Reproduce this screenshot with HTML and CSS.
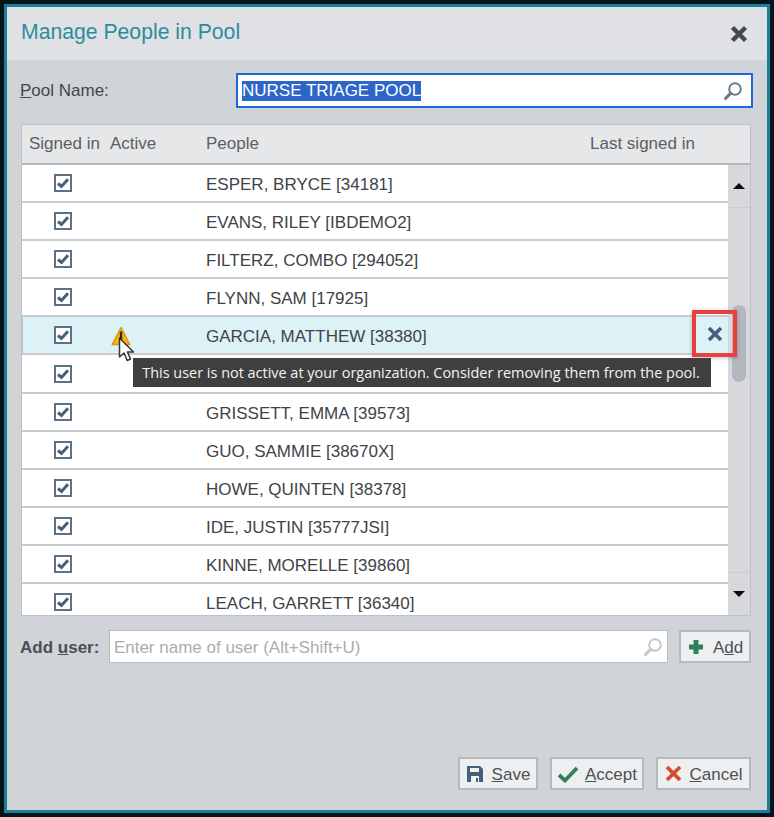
FILE: index.html
```html
<!DOCTYPE html>
<html lang="en">

<head>
    <meta charset="UTF-8">
    <meta name="viewport" content="width=device-width, initial-scale=1.0">
    <title>Manage People in Pool</title>
    <link rel="stylesheet" href="styles.css">
</head>

<body>
    <svg class="defs" width="0" height="0">
        <symbol id="check" viewBox="0 0 18 18">
            <rect x="1" y="1" width="16" height="16" fill="#fff" stroke="#5d7287" stroke-width="2" />
            <path d="M4 9.5l3.5 3L14 5.2" fill="none" stroke="#4a5f75" stroke-width="3" />
        </symbol>
        <symbol id="search" viewBox="0 0 20 20">
            <circle cx="12" cy="8" r="5.8" fill="none" stroke="currentColor" stroke-width="2" />
            <path d="M7.6 12.4L2.5 17.5" stroke="currentColor" stroke-width="3" stroke-linecap="round" />
        </symbol>
    </svg>

    <div class="dialog">
        <div class="dialog-head">
            <h1>Manage People in Pool</h1>
            <svg class="close-icon" width="18" height="18" viewBox="0 0 18 18">
                <path d="M2.5 2.5l13 13M15.5 2.5l-13 13" stroke="#43494f" stroke-width="4.4" />
            </svg>
        </div>

        <div class="dialog-body">
            <div class="pool-row">
                <label class="pool-label"><u>P</u>ool Name:</label>
                <div class="pool-input">
                    <span class="selected">NURSE TRIAGE POOL</span>
                    <svg class="search-icon dark" width="20" height="20"><use href="#search" /></svg>
                </div>
            </div>

            <div class="people">
                <div class="people-head">
                    <span>Signed in</span>
                    <span>Active</span>
                    <span>People</span>
                    <span>Last signed in</span>
                </div>
                <div class="people-main">
                    <div class="rows">
                        <div class="row">
                            <svg class="box" width="18" height="18"><use href="#check" /></svg>
                            <span></span>
                            <span>ESPER, BRYCE [34181]</span>
                        </div>
                        <div class="row">
                            <svg class="box" width="18" height="18"><use href="#check" /></svg>
                            <span></span>
                            <span>EVANS, RILEY [IBDEMO2]</span>
                        </div>
                        <div class="row">
                            <svg class="box" width="18" height="18"><use href="#check" /></svg>
                            <span></span>
                            <span>FILTERZ, COMBO [294052]</span>
                        </div>
                        <div class="row">
                            <svg class="box" width="18" height="18"><use href="#check" /></svg>
                            <span></span>
                            <span>FLYNN, SAM [17925]</span>
                        </div>
                        <div class="row hover">
                            <svg class="box" width="18" height="18"><use href="#check" /></svg>
                            <svg class="warn" width="20" height="20" viewBox="0 0 20 20">
                                <path d="M10 1.5L18.8 18.5H1.2z" fill="#f6b60f" stroke="#d99a05" stroke-width="1.5" stroke-linejoin="round" />
                                <path d="M10 5.5v8" stroke="#2c2a22" stroke-width="2.4" />
                            </svg>
                            <span>GARCIA, MATTHEW [38380]</span>
                        </div>
                        <div class="row">
                            <svg class="box" width="18" height="18"><use href="#check" /></svg>
                        </div>
                        <div class="row">
                            <svg class="box" width="18" height="18"><use href="#check" /></svg>
                            <span></span>
                            <span>GRISSETT, EMMA [39573]</span>
                        </div>
                        <div class="row">
                            <svg class="box" width="18" height="18"><use href="#check" /></svg>
                            <span></span>
                            <span>GUO, SAMMIE [38670X]</span>
                        </div>
                        <div class="row">
                            <svg class="box" width="18" height="18"><use href="#check" /></svg>
                            <span></span>
                            <span>HOWE, QUINTEN [38378]</span>
                        </div>
                        <div class="row">
                            <svg class="box" width="18" height="18"><use href="#check" /></svg>
                            <span></span>
                            <span>IDE, JUSTIN [35777JSI]</span>
                        </div>
                        <div class="row">
                            <svg class="box" width="18" height="18"><use href="#check" /></svg>
                            <span></span>
                            <span>KINNE, MORELLE [39860]</span>
                        </div>
                        <div class="row">
                            <svg class="box" width="18" height="18"><use href="#check" /></svg>
                            <span></span>
                            <span>LEACH, GARRETT [36340]</span>
                        </div>
                    </div>
                    <div class="scrollbar">
                        <div class="scroll-btn up"><i class="arrow-up"></i></div>
                        <div class="thumb"></div>
                        <div class="scroll-btn down"><i class="arrow-down"></i></div>
                    </div>
                </div>

                <!-- things that sit on top of the table -->
                <svg class="pointer" width="18" height="26" viewBox="0 0 18 26">
                    <path d="M1.5 1v19l4.5-4 3.2 7.5 3.4-1.5-3.2-7H15.5z" fill="#fff" stroke="#33363a" stroke-width="1.5" stroke-linejoin="round" />
                </svg>
                <div class="tip">This user is not active at your organization. Consider removing them from the pool.</div>
                <div class="remove-mark">
                    <svg width="16" height="16" viewBox="0 0 16 16">
                        <path d="M2 2l12 12M14 2L2 14" stroke="#47607a" stroke-width="3.6" />
                    </svg>
                </div>
            </div>

            <div class="add-row">
                <label class="add-label">Add <u>u</u>ser:</label>
                <div class="add-input">
                    <span class="placeholder">Enter name of user (Alt+Shift+U)</span>
                    <svg class="search-icon light" width="20" height="20"><use href="#search" /></svg>
                </div>
                <button class="btn add-btn" type="button">
                    <svg width="18" height="18" viewBox="0 0 18 18">
                        <path d="M9 2v14M2 9h14" stroke="#2f8058" stroke-width="5" />
                    </svg>
                    <span>A<u>d</u>d</span>
                </button>
            </div>

            <div class="actions">
                <button class="btn save-btn" type="button">
                    <svg width="18" height="18" viewBox="0 0 18 18">
                        <path d="M1 1h13l3 3v13H1z" fill="#45607c" />
                        <path d="M4 3h9v4H4z" fill="#f0f2f4" />
                        <path d="M5 11h8v6H5z" fill="#f0f2f4" />
                        <path d="M10 13h2v4h-2z" fill="#45607c" />
                    </svg>
                    <span><u>S</u>ave</span>
                </button>
                <button class="btn accept-btn" type="button">
                    <svg width="22" height="18" viewBox="0 0 22 18">
                        <path d="M2 10l6 5.5L20 3" fill="none" stroke="#2f8058" stroke-width="3.8" />
                    </svg>
                    <span><u>A</u>ccept</span>
                </button>
                <button class="btn cancel-btn" type="button">
                    <svg width="17" height="17" viewBox="0 0 17 17">
                        <path d="M2 2l13 13M15 2L2 15" stroke="#d24f2e" stroke-width="3.8" />
                    </svg>
                    <span><u>C</u>ancel</span>
                </button>
            </div>
        </div>
    </div>
</body>

</html>
```

FILE: styles.css
```css
* {
    box-sizing: border-box;
    margin: 0;
    padding: 0;
    font-family: "Liberation Sans", Arial, sans-serif;
}

html,
body {
    height: 817px;
    overflow: hidden;
}

body {
    background: #04141b;
    padding: 4px;
}

.defs {
    position: absolute;
}

.dialog {
    display: flex;
    flex-direction: column;
    width: 766px;
    height: 809px;
    border: 3px solid #1b8097;
    background: #d0d3d7;
}

.dialog-head {
    display: flex;
    justify-content: space-between;
    align-items: center;
    height: 53px;
    padding: 0 19px 0 14px;
    background: #dfe1e4;
}

.dialog-head h1 {
    margin-top: -4px;
    font-size: 21.2px;
    font-weight: 400;
    color: #2f8ba0;
}

.close-icon {
    margin-top: 1px;
}

.dialog-body {
    display: flex;
    flex-direction: column;
    flex: 1;
    padding: 13px 16px 20px 14px;
}

.pool-row {
    display: flex;
    justify-content: space-between;
    align-items: center;
    margin: 0 -2px 16px -1px;
}

.pool-label {
    font-size: 17px;
    color: #43474b;
}

.pool-input {
    display: flex;
    justify-content: space-between;
    align-items: center;
    width: 517px;
    height: 35px;
    padding: 0 8px 0 4px;
    border: 2px solid #1d69d8;
    background: #fff;
}

.selected {
    padding: 0 0 1px;
    background: #2d66cb;
    color: #fff;
    font-size: 17px;
    line-height: 19px;
}

.search-icon.dark {
    color: #6d7a84;
}

.search-icon.light {
    color: #c2c6ca;
}

.people {
    position: relative;
    height: 492px;
    border: 1px solid #bfc2c5;
}

.people-head {
    display: grid;
    grid-template-columns: 81px 96px 384px 1fr;
    align-items: center;
    height: 40px;
    padding-left: 7px;
    border-bottom: 2px solid #b4b6b8;
    background: #e6e7e9;
    font-size: 17px;
    color: #5a5f64;
}

.people-main {
    display: flex;
    height: 450px;
}

.rows {
    flex: 1;
    overflow: hidden;
    background: #fff;
}

.row {
    display: grid;
    grid-template-columns: 81px 96px 1fr;
    align-items: center;
    height: 38.1px;
    padding: 4px 0 0 7px;
    border-bottom: 2px solid #c9cbcd;
    font-size: 17px;
    color: #3f4347;
}

.row.hover {
    background: #dcf2f7;
    box-shadow: inset 1px 0 0 #bfc2c5;
}

.box {
    margin-left: 25px;
    margin-top: -4px;
}

.warn {
    margin-top: -3px;
    margin-left: 1px;
}

.scrollbar {
    display: flex;
    flex-direction: column;
    width: 22px;
    background: #d6d8db;
}

.scroll-btn {
    display: flex;
    justify-content: center;
    align-items: center;
    height: 43px;
    flex-shrink: 0;
}

.scroll-btn.up {
    border-bottom: 1px solid #cbced1;
}

.scroll-btn.down {
    margin-top: auto;
    border-top: 1px solid #cbced1;
}

.arrow-up {
    width: 0;
    height: 0;
    border: 6px solid transparent;
    border-top: 0;
    border-bottom: 6px solid #0d0d0d;
}

.arrow-down {
    width: 0;
    height: 0;
    border: 6px solid transparent;
    border-bottom: 0;
    border-top: 6px solid #0d0d0d;
}

.thumb {
    width: 14px;
    height: 77px;
    margin: 97px 0 0 4px;
    border-radius: 7px;
    background: #b3b7c0;
}

.pointer {
    position: absolute;
    left: 96px;
    top: 212px;
    z-index: 3;
}

.tip {
    position: absolute;
    left: 111px;
    top: 233px;
    width: 578px;
    height: 29px;
    padding-right: 2px;
    background: #3f3f3f;
    color: #f4f4f4;
    font-family: "Open Sans", sans-serif;
    font-size: 14.45px;
    line-height: 29px;
    text-align: center;
    white-space: nowrap;
    z-index: 2;
}

.remove-mark {
    position: absolute;
    left: 670px;
    top: 185px;
    display: flex;
    justify-content: center;
    align-items: center;
    width: 45px;
    height: 47px;
    border: 4px solid #e9403f;
    box-shadow: 0 1px 4px rgba(0, 0, 0, 0.25);
}

.add-row {
    display: flex;
    align-items: center;
    margin: 14px 0 0 -1px;
}

.add-label {
    width: 89px;
    padding-top: 2px;
    font-size: 17px;
    font-weight: 700;
    color: #4b4f54;
}

.add-input {
    display: flex;
    justify-content: space-between;
    align-items: center;
    width: 560px;
    height: 33px;
    padding: 0 4px;
    border: 1px solid #babdc0;
    background: #fff;
}

.placeholder {
    padding-top: 2px;
    font-size: 17px;
    color: #a9adb1;
}

.btn {
    display: flex;
    justify-content: center;
    align-items: center;
    gap: 8px;
    height: 33px;
    border: 2px solid #b7babd;
    background: #edeff1;
    font-size: 17px;
    color: #4c5156;
}

.btn span {
    padding-top: 2px;
}

.add-btn {
    width: 72px;
    margin-left: 11px;
}

.actions {
    display: flex;
    justify-content: flex-end;
    gap: 12px;
    margin-top: auto;
}

.save-btn {
    width: 80px;
}

.accept-btn {
    width: 94px;
    gap: 6px;
}

.cancel-btn {
    width: 95px;
}
```
